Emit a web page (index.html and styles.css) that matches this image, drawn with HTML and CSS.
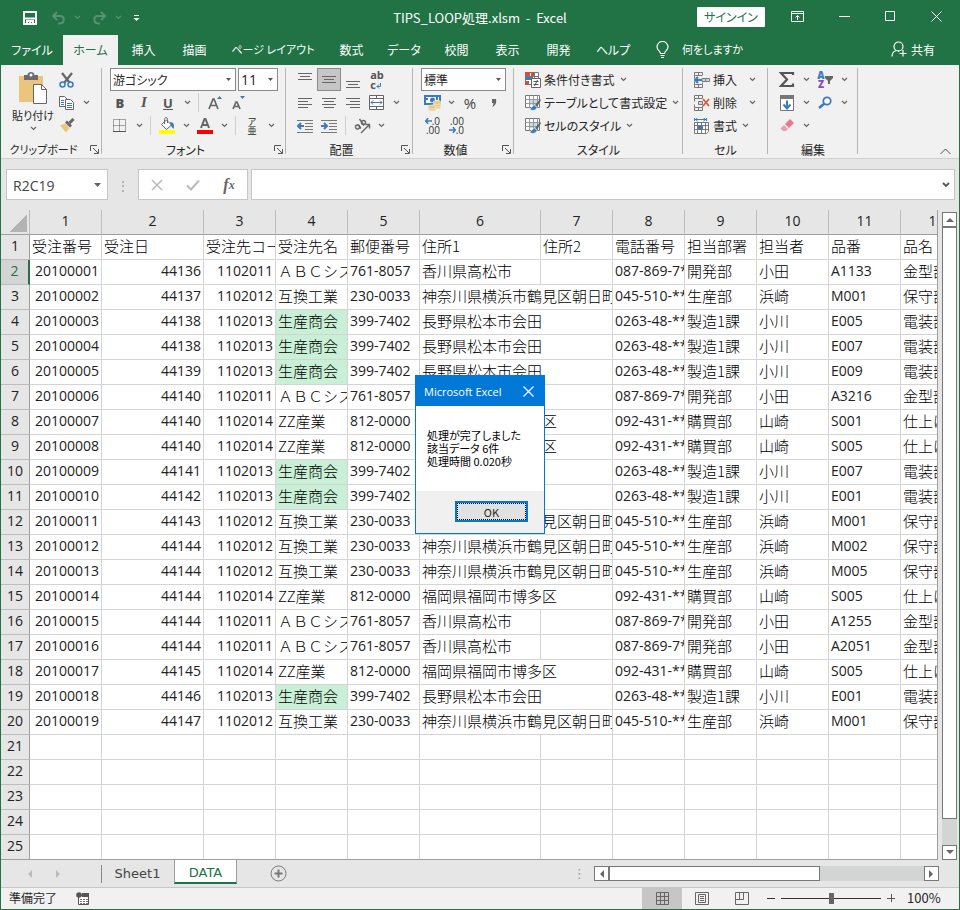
FILE: index.html
```
<!DOCTYPE html>
<html lang="ja">
<head>
  <meta charset="UTF-8">
  <meta name="viewport" content="width=device-width, initial-scale=1">
  <title>TIPS_LOOP処理.xlsm - Excel</title>
  <link rel="stylesheet" href="styles.css">
</head>
<body>
  <svg class="defs" aria-hidden="true">
    <symbol id="chev" viewBox="0 0 7 5"><path d="M1 1l2.5 2.5L6 1" fill="none" stroke="currentColor" stroke-width="1.2"/></symbol>
    <symbol id="launch" viewBox="0 0 9 9"><path d="M.5 6V.5H7M3 3l5 5M8.500 4v4.500H4" fill="none" stroke="currentColor"/></symbol>
    <symbol id="cells" viewBox="0 0 16 16"><path d="M.5 3V.5h8V3M.5 3.500h8M4.500.5v3M.5 13v2.500h8V13M.5 12.500h8M4.500 12.500v3M.5 3.500v3M.5 12.500v-3M8.500 12.500v-2" fill="none" stroke="#777"/></symbol>
    <symbol id="brushtable" viewBox="0 0 16 16"><path d="M.5.5h14v12H.5z" fill="#fff" stroke="#777"/><path d="M4 4h8v6H4z" fill="#c5daee"/><path d="M.5 4.500h14M.5 8.500h14M4.500.5v12M8.500.5v12M12.500.5v12" stroke="#999" fill="none"/><path d="M15 4l-5 6 2 2 4-7z" fill="#666"/><path d="M9.500 10c-2 0-2 3-5 4 2 2 6 2 7.500-1.500z" fill="#3b7abf" stroke="#f1f1f1" stroke-width=".6"/></symbol>
  </svg>

  <header class="titlebar">
    <div class="quick">
      <button type="button" aria-label="上書き保存"><svg width="14" height="14"><path d="M1 1h12v12H1z" fill="none" stroke="#fff" stroke-width="2"/><path d="M2 7.500h10M4 13v-3h6v3" stroke="#fff" stroke-width="2" fill="none"/><path d="M6 11h2v2H6z" fill="#fff"/></svg></button>
      <button type="button" class="off" aria-label="元に戻す"><svg width="15" height="14"><path d="M6 1L2 5l4 4M2 5h7c5 0 5 7 0 7.500H7" fill="none" stroke="currentColor" stroke-width="2"/></svg></button>
      <button type="button" class="off arrow" aria-label="元に戻す一覧"><svg class="chev"><use href="#chev"/></svg></button>
      <button type="button" class="off" aria-label="やり直し"><svg width="15" height="14"><path d="M9 1l4 4-4 4M13 5H6c-5 0-5 7 0 7.500h2" fill="none" stroke="currentColor" stroke-width="2"/></svg></button>
      <button type="button" class="off arrow" aria-label="やり直し一覧"><svg class="chev"><use href="#chev"/></svg></button>
      <button type="button" class="custom" aria-label="ツールバーのカスタマイズ"><svg width="7" height="8"><path d="M1 1.500h5" stroke="#fff"/><path d="M.5 4h6l-3 3z" fill="#fff"/></svg></button>
    </div>
    <div class="title">TIPS_LOOP処理.xlsm&nbsp; -&nbsp; Excel</div>
    <div class="wincontrols">
      <button type="button" class="signin">サインイン</button>
      <button type="button" class="wide" aria-label="リボンの表示オプション"><svg width="14" height="11"><path d="M.5.5h12v10H.5zM.5 2.500h12M6.500 9V4.500M4.500 6.500l2-2 2 2" fill="none" stroke="#fff"/></svg></button>
      <button type="button" aria-label="最小化"><svg width="11" height="11"><path d="M0 5.500h11" stroke="#fff"/></svg></button>
      <button type="button" aria-label="最大化"><svg width="11" height="11"><path d="M.5.5h9v9h-9z" fill="none" stroke="#fff"/></svg></button>
      <button type="button" aria-label="閉じる"><svg width="11" height="11"><path d="M.5.5l10 10M10.500.5l-10 10" stroke="#fff"/></svg></button>
    </div>
  </header>

  <nav class="menu">
    <a href="#">ファイル</a>
    <a href="#" class="active">ホーム</a>
    <a href="#">挿入</a>
    <a href="#">描画</a>
    <a href="#" class="long">ページ レイアウト</a>
    <a href="#">数式</a>
    <a href="#">データ</a>
    <a href="#">校閲</a>
    <a href="#">表示</a>
    <a href="#">開発</a>
    <a href="#">ヘルプ</a>
    <a href="#" class="tell"><svg width="13" height="17"><path d="M4.500 12.500c0-2-3.500-3-3.500-6.500a5.500 5.500 0 0 1 11 0c0 3.500-3.500 4.500-3.500 6.500zM4.500 14.500h4M5 16.500h3" fill="none" stroke="#fff" stroke-width="1.200"/></svg>何をしますか</a>
    <a href="#" class="share"><svg width="16" height="16"><circle cx="7.500" cy="5.500" r="4.500" fill="none" stroke="#fff" stroke-width="1.200"/><path d="M1 15.500c0-3 2-5.500 4.500-6M8 11l-1-1.500M12 9v6.500M8.500 12.500h7" fill="none" stroke="#fff" stroke-width="1.200"/></svg>共有</a>
  </nav>

  <section class="ribbon">
    <div class="group clipboard">
      <div class="cols">
        <button type="button" class="paste">
          <svg width="30" height="32"><path d="M1 4h24v26H1z" fill="#ebc57b"/><path d="M6 3h3.500c0-4 7-4 7 0H20v5H6z" fill="#6b6b6b"/><circle cx="13" cy="3" r="1.500" fill="#fff"/><path d="M15.500 12.500h8l5 5v14h-13z" fill="#fff" stroke="#666"/><path d="M23.500 12.500v5h5" fill="none" stroke="#666"/></svg>
          貼り付け
          <svg class="chev"><use href="#chev"/></svg>
        </button>
        <div class="stack">
          <div class="row"><button type="button" class="tool" aria-label="切り取り"><svg width="16" height="16"><path d="M3 1l7.500 9.500M13 1L5.500 10.500" stroke="#666" stroke-width="2.200"/><circle cx="3.500" cy="12.500" r="2.500" fill="none" stroke="#3b7abf" stroke-width="1.500"/><circle cx="11.500" cy="12.500" r="2.500" fill="none" stroke="#3b7abf" stroke-width="1.500"/></svg></button></div>
          <div class="row"><button type="button" class="tool" aria-label="コピー"><svg width="16" height="14"><path d="M.5.5h5l3 3v7h-8z" fill="#fff" stroke="#666"/><path d="M2 4.500h3M2 6.500h3M2 8.500h3" stroke="#3b7abf"/><path d="M6.500 3.500h5l3 3v7h-8z" fill="#fff" stroke="#666"/><path d="M8 7.500h5M8 9.500h5M8 11.500h5" stroke="#3b7abf"/></svg></button><button type="button" class="arrow" aria-label="コピーの種類"><svg class="chev"><use href="#chev"/></svg></button></div>
          <div class="row"><button type="button" class="tool" aria-label="書式のコピー"><svg width="16" height="15"><path d="M1 7.500l5-2 4.500 4.500-3.500 4.500z" fill="#ebc57b"/><path d="M6 4.500l2-2 5 5-2 2z" fill="#666"/><path d="M10.500 5l4-4" stroke="#666" stroke-width="3"/></svg></button></div>
        </div>
      </div>
      <div class="caption"><span>クリップボード</span><button type="button" aria-label="クリップボードの設定"><svg class="launch"><use href="#launch"/></svg></button></div>
    </div>

    <div class="group font">
      <div class="row combos">
        <select class="combo fontname" aria-label="フォント"><option>游ゴシック</option></select>
        <select class="combo fontsize" aria-label="フォント サイズ"><option>11</option></select>
      </div>
      <div class="row">
        <button type="button" class="tool letter"><b>B</b></button>
        <button type="button" class="tool letter"><i>I</i></button>
        <button type="button" class="tool letter"><u>U</u></button>
        <button type="button" class="arrow" aria-label="下線の種類"><svg class="chev"><use href="#chev"/></svg></button>
        <span class="sep"></span>
        <button type="button" class="tool" aria-label="フォント サイズの拡大"><svg width="14" height="15"><path d="M1 14L5 4h1l4 10M2.500 10.500h6" fill="none" stroke="#666" stroke-width="1.700"/><path d="M9 4h5l-2.500-3z" fill="#3b7abf"/></svg></button>
        <button type="button" class="tool" aria-label="フォント サイズの縮小"><svg width="14" height="15"><path d="M1 14l3-7h1l3 7M2 11.500h5" fill="none" stroke="#666" stroke-width="1.700"/><path d="M8 1h5l-2.500 3z" fill="#3b7abf"/></svg></button>
      </div>
      <div class="row">
        <button type="button" class="tool" aria-label="罫線"><svg width="14" height="14"><path d="M.5.5h12v12H.5zM6.500.5v12M.5 6.500h12" fill="none" stroke="#555" stroke-dasharray="1 1"/><path d="M0 12.500h13" stroke="#555"/></svg></button>
        <button type="button" class="arrow" aria-label="罫線の種類"><svg class="chev"><use href="#chev"/></svg></button>
        <span class="sep"></span>
        <button type="button" class="tool" aria-label="塗りつぶしの色"><svg width="16" height="17"><path d="M2.500 7.500l5-4.500 5 5-5 4.500z" fill="#fff" stroke="#666"/><path d="M5.500 7V2.500c0-2.500 3-2.500 3 0V6" fill="none" stroke="#666"/><path d="M11 5c4 0 4.500 3 3.500 7l-2.500-3z" fill="#3b7abf"/><path d="M0 13h16v4H0z" fill="#ff0"/></svg></button>
        <button type="button" class="arrow" aria-label="塗りつぶしの色の一覧"><svg class="chev"><use href="#chev"/></svg></button>
        <button type="button" class="tool" aria-label="フォントの色"><svg width="16" height="17"><path d="M4 11L7.500 2h1L12 11M5 8h6" fill="none" stroke="#666" stroke-width="2"/><path d="M0 13h16v4H0z" fill="red"/></svg></button>
        <button type="button" class="arrow" aria-label="フォントの色の一覧"><svg class="chev"><use href="#chev"/></svg></button>
        <span class="sep"></span>
        <button type="button" class="tool ruby"><span>ア</span><span>亜</span></button>
        <button type="button" class="arrow" aria-label="ふりがなの設定"><svg class="chev"><use href="#chev"/></svg></button>
      </div>
      <div class="caption"><span>フォント</span><button type="button" aria-label="フォントの設定"><svg class="launch"><use href="#launch"/></svg></button></div>
    </div>

    <div class="group align">
      <div class="row">
        <button type="button" class="tool" aria-label="上揃え"><svg width="14" height="16"><path d="M0 1.500h14M2 4.500h10M0 7.500h14" stroke="#666"/></svg></button>
        <button type="button" class="tool pressed" aria-label="上下中央揃え"><svg width="14" height="12"><path d="M0 2.500h14M2 5.500h10M0 8.500h14" stroke="#666"/></svg></button>
        <button type="button" class="tool" aria-label="下揃え"><svg width="14" height="16"><path d="M0 9.500h14M2 12.500h10M0 15.500h14" stroke="#666"/></svg></button>
        <button type="button" class="tool" aria-label="折り返して全体を表示する"><span class="wrap">ab<br>c<svg width="6" height="6"><path d="M4.500 0v3.500H1M3 1.500l-2 2 2 2" stroke="#3b7abf" fill="none"/></svg></span></button>
      </div>
      <div class="row">
        <button type="button" class="tool" aria-label="左揃え"><svg width="14" height="12"><path d="M0 1.500h14M0 4.500h10M0 7.500h14M0 10.500h10" stroke="#666"/></svg></button>
        <button type="button" class="tool" aria-label="中央揃え"><svg width="14" height="12"><path d="M0 1.500h14M2 4.500h10M0 7.500h14M2 10.500h10" stroke="#666"/></svg></button>
        <button type="button" class="tool" aria-label="右揃え"><svg width="14" height="12"><path d="M0 1.500h14M4 4.500h10M0 7.500h14M4 10.500h10" stroke="#666"/></svg></button>
        <button type="button" class="tool" aria-label="セルを結合して中央揃え"><svg width="16" height="15"><path d="M.5.5h14v14H.5zM.5 3.500h14M.5 11.500h14M7.500.5v3M7.500 11.500v3" fill="#fff" stroke="#666"/><path d="M2 7.500h11M4 5.500l-2 2 2 2M11 5.500l2 2-2 2" fill="none" stroke="#3b7abf"/></svg></button>
        <button type="button" class="arrow" aria-label="結合の種類"><svg class="chev"><use href="#chev"/></svg></button>
      </div>
      <div class="row">
        <button type="button" class="tool" aria-label="インデントを減らす"><svg width="16" height="14"><path d="M0 1.500h16M8 4.500h8M8 7.500h8M8 10.500h8M0 13.500h16" stroke="#777"/><path d="M1 7h6M4 4L1 7l3 3" fill="none" stroke="#3b7abf" stroke-width="2"/></svg></button>
        <button type="button" class="tool" aria-label="インデントを増やす"><svg width="16" height="14"><path d="M0 1.500h16M8 4.500h8M8 7.500h8M8 10.500h8M0 13.500h16" stroke="#777"/><path d="M0 7h6M3 4l3 3-3 3" fill="none" stroke="#3b7abf" stroke-width="2"/></svg></button>
        <span class="sep"></span>
        <button type="button" class="tool" aria-label="方向"><svg width="17" height="16"><g fill="none" stroke="#666" stroke-width="1.400"><circle cx="3.500" cy="9" r="2"/><path d="M4 6.500l3 4M5.500 1l4.500 6.500M7 15l8-8M11.500 6.500h4v4"/><circle cx="9.500" cy="4.500" r="2"/></g></svg></button>
        <button type="button" class="arrow" aria-label="方向の種類"><svg class="chev"><use href="#chev"/></svg></button>
      </div>
      <div class="caption"><span>配置</span><button type="button" aria-label="配置の設定"><svg class="launch"><use href="#launch"/></svg></button></div>
    </div>

    <div class="group number">
      <div class="row combos"><select class="combo format" aria-label="数値の書式"><option>標準</option></select></div>
      <div class="row">
        <button type="button" class="tool" aria-label="通貨表示形式"><svg width="17" height="17"><path d="M1 2h15v8H1z" fill="#fff" stroke="#3b7abf" stroke-width="2"/><circle cx="8.500" cy="6" r="2.500" fill="#3b7abf"/><path d="M1 5h3M13 3v3" stroke="#3b7abf" stroke-width="2"/><g fill="#ebc57b" stroke="#f1f1f1" stroke-width=".7"><ellipse cx="13" cy="13" rx="4" ry="2"/><ellipse cx="13" cy="11" rx="4" ry="2"/><ellipse cx="13" cy="8.500" rx="4" ry="2"/><ellipse cx="8" cy="15" rx="4" ry="2"/><ellipse cx="8" cy="13" rx="4" ry="2"/></g></svg></button>
        <button type="button" class="arrow" aria-label="通貨の種類"><svg class="chev"><use href="#chev"/></svg></button>
        <button type="button" class="tool percent">%</button>
        <button type="button" class="tool" aria-label="桁区切りスタイル"><svg width="6" height="8"><path d="M1 0h4c1 4-1 7-4 8 1-2 2-3 1-4H1z" fill="#666"/></svg></button>
      </div>
      <div class="row">
        <button type="button" class="tool digits" aria-label="小数点以下の表示桁数を増やす"><span><svg width="7" height="6"><path d="M0 3h7M3 0L1 3l2 3" fill="none" stroke="#3b7abf" stroke-width="1.500"/></svg>.0</span><span>.00</span></button>
        <button type="button" class="tool digits" aria-label="小数点以下の表示桁数を減らす"><span>.00</span><span><svg width="7" height="6"><path d="M0 3h7M4 0l2 3-2 3" fill="none" stroke="#3b7abf" stroke-width="1.500"/></svg>.0</span></button>
      </div>
      <div class="caption"><span>数値</span><button type="button" aria-label="表示形式の設定"><svg class="launch"><use href="#launch"/></svg></button></div>
    </div>

    <div class="group styles">
      <div class="row"><button type="button" class="labeled"><svg width="16" height="16"><path d="M.5.5h13v12H.5z" fill="#fff" stroke="#777"/><path d="M0 0h5v4H0zM6 0h3v4H6zM0 9h4v4H0z" fill="#d0512e"/><path d="M0 5h8v3H0z" fill="#3b7abf"/><path d="M.5 4.500h13M9.500.5v6" stroke="#777"/><path d="M6.500 6.500h9v9h-9z" fill="#fff" stroke="#666"/><path d="M8.500 9.500h5M8.500 12.500h5M12.500 8l-3 6" stroke="#555"/></svg>条件付き書式<svg class="chev"><use href="#chev"/></svg></button></div>
      <div class="row"><button type="button" class="labeled"><svg width="16" height="16"><use href="#brushtable"/></svg>テーブルとして書式設定<svg class="chev"><use href="#chev"/></svg></button></div>
      <div class="row"><button type="button" class="labeled"><svg width="16" height="16"><use href="#brushtable"/></svg>セルのスタイル<svg class="chev"><use href="#chev"/></svg></button></div>
      <div class="caption"><span>スタイル</span></div>
    </div>

    <div class="group cellops">
      <div class="row"><button type="button" class="labeled"><svg width="16" height="16"><use href="#cells"/><path d="M8 6.500h7.500v3H8zM11.500 6.500v3" fill="#c5daee" stroke="#777"/><path d="M1 8h7M4 5L1 8l3 3" fill="none" stroke="#3b7abf" stroke-width="2"/></svg>挿入</button><button type="button" class="arrow last" aria-label="挿入の種類"><svg class="chev"><use href="#chev"/></svg></button></div>
      <div class="row"><button type="button" class="labeled"><svg width="16" height="16"><use href="#cells"/><path d="M4.500 6.500h4v3h-4z" fill="#c5daee" stroke="#777"/><path d="M9 4l6 7M15 4l-6 7" stroke="#e0593b" stroke-width="1.800"/></svg>削除</button><button type="button" class="arrow last" aria-label="削除の種類"><svg class="chev"><use href="#chev"/></svg></button></div>
      <div class="row"><button type="button" class="labeled"><svg width="16" height="16"><path d="M1 1.500h11M.5 0v3M12.500 0v3M3.500 0l-2 1.500 2 1.500M9.500 0l2 1.500-2 1.500" fill="none" stroke="#3b7abf"/><path d="M.5 4.500h14v9l-2 2H.5zM.5 7.500h14M.5 11.500h14M3.500 4.500v11M11.500 4.500v11M7.500 4.500v11" fill="#fff" stroke="#777"/><path d="M4 8h5v3H4z" fill="#3b7abf"/></svg>書式<svg class="chev"><use href="#chev"/></svg></button></div>
      <div class="caption"><span>セル</span></div>
    </div>

    <div class="group edit">
      <div class="row">
        <button type="button" class="tool" aria-label="オート SUM"><svg width="16" height="15"><path d="M14 3V1H2l6 6.500L2 14h12v-2.500" fill="none" stroke="#555" stroke-width="2.200"/></svg></button>
        <button type="button" class="arrow" aria-label="集計の種類"><svg class="chev"><use href="#chev"/></svg></button>
        <button type="button" class="tool" aria-label="並べ替えとフィルター"><span class="sort"><b>A</b><b class="z">Z</b></span><svg width="8" height="8"><path d="M0 0h8v2L5 5v3H3V5L0 2z" fill="#666"/></svg></button>
        <button type="button" class="arrow" aria-label="並べ替えの種類"><svg class="chev"><use href="#chev"/></svg></button>
      </div>
      <div class="row">
        <button type="button" class="tool" aria-label="フィル"><svg width="14" height="16"><path d="M.5.5h13v15H.5z" fill="#fff" stroke="#777"/><path d="M0 0h14v4H0z" fill="#777"/><path d="M7 5.500v8M3.500 9.500l3.500 4 3.500-4" fill="none" stroke="#3b7abf" stroke-width="2"/></svg></button>
        <button type="button" class="arrow" aria-label="フィルの種類"><svg class="chev"><use href="#chev"/></svg></button>
        <button type="button" class="tool" aria-label="検索と選択"><svg width="14" height="13"><circle cx="9" cy="5" r="3.700" fill="#fff" stroke="#3b7abf" stroke-width="1.800"/><path d="M6.500 7.500L1 12" stroke="#3b7abf" stroke-width="2.500"/></svg></button>
        <button type="button" class="arrow" aria-label="検索の種類"><svg class="chev"><use href="#chev"/></svg></button>
      </div>
      <div class="row">
        <button type="button" class="tool" aria-label="クリア"><svg width="14" height="13"><path d="M5 5l5-5 4 4-5 5z" fill="#e8798c"/><path d="M4 6l4 4-2 2H3L.5 9.500z" fill="#ee9dab"/></svg></button>
        <button type="button" class="arrow" aria-label="クリアの種類"><svg class="chev"><use href="#chev"/></svg></button>
      </div>
      <div class="caption"><span>編集</span></div>
    </div>

    <button type="button" class="collapse" aria-label="リボンを折りたたむ"><svg width="11" height="7"><path d="M.5 6l5-5 5 5" fill="none" stroke="#555"/></svg></button>
  </section>

  <div class="formulabar">
    <select class="namebox" aria-label="名前ボックス"><option>R2C19</option></select>
    <span class="dots">⋮</span>
    <div class="fxbox">
      <button type="button" aria-label="キャンセル"><svg width="12" height="12"><path d="M1 1l10 10M11 1L1 11" stroke="#bbb" stroke-width="1.600"/></svg></button>
      <button type="button" aria-label="入力"><svg width="14" height="12"><path d="M1 6.500l4 4L13 1.500" fill="none" stroke="#bbb" stroke-width="2"/></svg></button>
      <button type="button" class="fx" aria-label="関数の挿入"><i>f</i><i class="x">x</i></button>
    </div>
    <div class="formula">
      <input type="text" aria-label="数式バー">
      <button type="button" aria-label="数式バーの展開"><svg width="8" height="6"><path d="M1 1l3 3 3-3" fill="none" stroke="#555" stroke-width="1.800"/></svg></button>
    </div>
  </div>

  <main class="sheet">
    <div class="gridwrap">
      <table class="grid">
        <colgroup id="cols"></colgroup>
        <thead><tr id="head"></tr></thead>
        <tbody id="rows"></tbody>
      </table>
    </div>
    <div class="vscroll">
      <button type="button" aria-label="上へスクロール"><svg width="8" height="5"><path d="M0 5l4-4 4 4z" fill="#666"/></svg></button>
      <div class="thumb"></div>
      <div class="track"></div>
      <button type="button" aria-label="下へスクロール"><svg width="8" height="5"><path d="M0 0l4 4 4-4z" fill="#666"/></svg></button>
    </div>
  </main>

  <div class="sheettabs">
    <div class="nav">
      <button type="button" aria-label="前のシート"><svg width="4" height="8"><path d="M4 0v8L0 4z" fill="#bbb"/></svg></button>
      <button type="button" aria-label="次のシート"><svg width="4" height="8"><path d="M0 0v8l4-4z" fill="#bbb"/></svg></button>
    </div>
    <a href="#" class="tab">Sheet1</a>
    <a href="#" class="tab current">DATA</a>
    <button type="button" class="add" aria-label="新しいシート"><svg width="17" height="17"><circle cx="8.500" cy="8.500" r="7.500" fill="none" stroke="#777"/><path d="M8.500 4.500v8M4.500 8.500h8" stroke="#777" stroke-width="2"/></svg></button>
    <span class="dots">⋮</span>
    <div class="hscroll">
      <button type="button" aria-label="左へスクロール"><svg width="5" height="8"><path d="M5 0v8L1 4z" fill="#666"/></svg></button>
      <div class="thumb"></div>
      <div class="track"></div>
      <button type="button" aria-label="右へスクロール"><svg width="5" height="8"><path d="M0 0v8l4-4z" fill="#666"/></svg></button>
    </div>
  </div>

  <footer class="status">
    <span>準備完了</span>
    <button type="button" class="macro" aria-label="マクロの記録"><svg width="14" height="13"><path d="M2.500 3.500h10v9h-10z" fill="#fff" stroke="#555"/><path d="M6 1h7v4H6z" fill="#555"/><circle cx="3" cy="3" r="2.800" fill="#555"/><path d="M4 7.500h8M4 9.500h8M4 11.500h8" stroke="#777" stroke-dasharray="2 1"/></svg></button>
    <div class="views">
      <button type="button" class="on" aria-label="標準"><svg width="13" height="13"><path d="M.5.5h12v12H.5zM.5 4.500h12M.5 8.500h12M4.500.5v12M8.500.5v12" fill="none" stroke="#666"/></svg></button>
      <button type="button" aria-label="ページ レイアウト"><svg width="14" height="13"><path d="M.5.5h13v12H.5zM3.500 2.500h7v8h-7zM5 4.500h4M5 6.500h4M5 8.500h4" fill="none" stroke="#666"/></svg></button>
      <button type="button" aria-label="改ページ プレビュー"><svg width="14" height="13"><path d="M.5.5h13v12H.5zM4.500.5v7M8.500.5v7h-8" fill="none" stroke="#666"/></svg></button>
    </div>
    <button type="button" class="zoombtn" aria-label="縮小"><svg width="9" height="9"><path d="M0 4.500h8" stroke="#333"/></svg></button>
    <input type="range" class="zoom" min="0" max="100" value="50" aria-label="ズーム">
    <button type="button" class="zoombtn" aria-label="拡大"><svg width="9" height="9"><path d="M0 4.500h8M4.500 0v8" stroke="#555"/></svg></button>
    <span class="percentage">100%</span>
  </footer>

  <div class="dialog" role="dialog" aria-labelledby="dlgTitle">
    <div class="dlgtitle"><span id="dlgTitle">Microsoft Excel</span><button type="button" aria-label="閉じる"><svg width="11" height="11"><path d="M.5.5l10 10M10.500.5l-10 10" stroke="#fff" stroke-width="1.300"/></svg></button></div>
    <p>処理が完了しました<br>該当データ 6件<br>処理時間 0.020秒</p>
    <div class="dlgfoot"><button type="button">OK</button></div>
  </div>

  <script src="script.js"></script>
</body>
</html>
```
FILE: styles.css
```
* {
  box-sizing: border-box;
}
body {
  margin: 0;
  height: 100vh;
  display: flex;
  flex-direction: column;
  position: relative;
  overflow: hidden;
  border: 1px solid #217346;
  border-top: none;
  background: #e6e6e6;
  color: #262626;
  font-family: "Noto Sans CJK JP", sans-serif;
  font-size: 12px;
  font-feature-settings: "palt";
}
button, select, input {
  font: inherit;
  font-feature-settings: inherit;
  color: inherit;
  margin: 0;
}
button {
  display: flex;
  align-items: center;
  justify-content: center;
  padding: 0;
  border: none;
  background: none;
  white-space: nowrap;
}
svg {
  display: block;
  flex: none;
}
a {
  color: inherit;
  text-decoration: none;
}
.defs {
  display: none;
}
.chev {
  width: 7px;
  height: 5px;
  color: #666;
}
.launch {
  width: 9px;
  height: 9px;
  color: #555;
}
.arrow {
  width: 14px;
  height: 23px;
}

/* title bar */
.titlebar {
  display: grid;
  grid-template-columns: 1fr auto 1fr;
  align-items: center;
  height: 35px;
  background: #217346;
  color: #fff;
}
.quick {
  display: flex;
  padding-left: 17px;
}
.quick button {
  width: 24px;
}
.quick .off, .quick .off .chev {
  color: #569273;
}
.quick .off {
  margin-left: 4px;
}
.quick .off.arrow {
  width: 14px;
  margin: 0;
}
.quick .off.arrow + button {
  margin-left: 3px;
}
.quick .custom {
  width: 16px;
}
.title {
  font-size: 13px;
}
.wincontrols {
  display: flex;
  justify-content: flex-end;
  align-items: center;
  padding-bottom: 2px;
}
.wincontrols button {
  width: 46px;
  height: 20px;
}
.wincontrols .signin {
  width: 68px;
  background: #fff;
  color: #217346;
  border-radius: 1px;
}
.wincontrols .wide {
  width: 56px;
  padding-left: 10px;
}

/* menu */
.menu {
  display: grid;
  grid-template-columns: 62px 55px 51px 51px 106px 51px 54px 51px 51px 51px 58px 1fr auto;
  height: 30px;
  background: #217346;
  color: #fff;
}
.menu a {
  display: flex;
  align-items: center;
  justify-content: center;
  padding-bottom: 2px;
  white-space: nowrap;
}
.menu .active {
  background: #f1f1f1;
  color: #217346;
}
.menu .long {
  font-size: 11px;
}
.menu .tell {
  justify-content: flex-start;
  gap: 13px;
  padding-left: 14px;
  font-size: 11px;
}
.menu .share {
  gap: 4px;
  padding-right: 24px;
}

/* ribbon */
.ribbon {
  display: flex;
  height: 94px;
  padding-top: 3px;
  background: #f1f1f1;
  border-bottom: 1px solid #cfcfcf;
}
.group {
  flex: none;
  display: flex;
  flex-direction: column;
  background: linear-gradient(#b5b5b5, #b5b5b5) right top / 1px 86px no-repeat;
}
.clipboard { width: 101px; }
.font { width: 184px; padding-left: 6px; }
.align { width: 127px; padding-left: 7px; }
.number { width: 101px; padding-left: 7px; }
.styles { width: 169px; padding-left: 11px; }
.cellops { width: 85px; padding-left: 11px; }
.edit { width: 90px; padding-left: 7px; }
.cols {
  display: flex;
}
.row {
  display: flex;
  align-items: center;
  height: 23px;
}
.tool {
  width: 24px;
  height: 23px;
}
.sep {
  width: 1px;
  height: 19px;
  margin: 0 4px;
  background: #cfcfcf;
}
.paste {
  flex-direction: column;
  justify-content: space-between;
  width: 54px;
  height: 69px;
  padding: 4px 0 6px 10px;
  font-size: 11px;
  line-height: 16px;
}
.labeled {
  gap: 3px;
}
.labeled .chev {
  margin-left: 2px;
}
.arrow.last {
  margin-left: auto;
  margin-right: 9px;
}
.caption {
  display: flex;
  align-items: center;
  height: 21px;
  padding-top: 3px;
}
.caption span {
  flex: 1;
  text-align: center;
  white-space: nowrap;
}
.caption button {
  width: 16px;
}
.clipboard .caption { font-size: 11px; }
.font .caption, .align .caption, .number .caption, .edit .caption { margin-left: -7px; }
.styles .caption, .cellops .caption { margin-left: -11px; }
.combos {
  gap: 2px;
  padding-left: 2px;
}
.align .combos, .number .combos {
  padding-left: 1px;
}
.combo {
  height: 23px;
  padding: 0 2px;
  appearance: none;
  border: 1px solid #8a8a8a;
  border-radius: 0;
  background: #fff url("data:image/svg+xml,%3Csvg xmlns='http://www.w3.org/2000/svg' width='5' height='3'%3E%3Cpath d='M0 0h5L2.500 3z' fill='%23555'/%3E%3C/svg%3E") right 4px center no-repeat;
}
.fontname { width: 126px; }
.fontsize { width: 40px; font-size: 14px; font-family: "Open Sans", sans-serif; }
.format { width: 85px; }
.letter {
  font-family: "Open Sans", sans-serif;
  font-size: 13px;
  font-weight: bold;
  color: #555;
}
.letter i {
  font-family: "Liberation Serif", serif;
  font-size: 15px;
}
.ruby {
  flex-direction: column;
  font-size: 9px;
  line-height: 9px;
}
.pressed {
  background: #c6c6c6;
  border: 1px solid #8a8a8a;
}
.wrap {
  font: bold 11px/10px "Open Sans", sans-serif;
  color: #555;
  text-align: left;
}
.wrap svg {
  display: inline-block;
}
.percent {
  font: 15px "Open Sans", sans-serif;
  color: #444;
}
.digits {
  flex-direction: column;
  align-items: flex-end;
  padding-right: 4px;
  font: 10px/9px "Open Sans", sans-serif;
  color: #333;
}
.digits span {
  display: flex;
  align-items: center;
}
.sort {
  display: flex;
  flex-direction: column;
  font: bold 10px/9px "Open Sans", sans-serif;
  color: #3b7abf;
}
.sort .z {
  color: #8e4bb5;
}
.collapse {
  width: 20px;
  margin-left: auto;
  margin-right: 4px;
  align-items: flex-end;
  padding-bottom: 3px;
}

/* formula bar */
.formulabar {
  display: flex;
  height: 51px;
  padding: 10px 4px 10px 5px;
}
.namebox {
  width: 102px;
  padding: 2px 6px 0;
  appearance: none;
  border: 1px solid #c6c6c6;
  border-radius: 0;
  background: #fff url("data:image/svg+xml,%3Csvg xmlns='http://www.w3.org/2000/svg' width='7' height='4'%3E%3Cpath d='M0 0h7L3.500 4z' fill='%23666'/%3E%3C/svg%3E") right 6px center no-repeat;
  font: 14px "Open Sans", sans-serif;
  color: #444;
}
.dots {
  width: 30px;
  align-self: center;
  text-align: center;
  color: #999;
}
.fxbox {
  display: flex;
  width: 110px;
  margin-right: 3px;
  background: #fff;
  border: 1px solid #c6c6c6;
}
.fxbox button {
  flex: 1;
}
.fx {
  font-family: "Liberation Serif", serif;
  font-size: 16px;
  font-weight: bold;
  color: #666;
}
.fx .x {
  font-size: 12px;
  padding-top: 2px;
}
.formula {
  flex: 1;
  display: flex;
  background: #fff;
  border: 1px solid #c6c6c6;
}
.formula input {
  flex: 1;
  border: none;
  outline: none;
}
.formula button {
  width: 16px;
}

/* grid */
.sheet {
  flex: 1;
  display: flex;
  min-height: 0;
}
.gridwrap {
  flex: 1;
  overflow: hidden;
  background: #fff;
  border-right: 1px solid #9f9f9f;
  border-bottom: 1px solid #9f9f9f;
}
.grid {
  width: 972px;
  table-layout: fixed;
  border-collapse: separate;
  border-spacing: 0;
  font-feature-settings: normal;
  font-size: 15px;
  font-weight: 300;
  color: #000;
}
.grid th, .grid td {
  height: 25px;
  padding: 0 2px 2px;
  overflow: hidden;
  line-height: 22px;
  white-space: nowrap;
  text-align: left;
  font-weight: 300;
  border-right: 1px solid #d4d4d4;
  border-bottom: 1px solid #d4d4d4;
}
.grid .num, .grid .code, .grid th {
  font-family: "Open Sans", "Noto Sans CJK JP", sans-serif;
  font-size: 14px;
  font-weight: 400;
}
.grid .num, .grid .code {
  color: #222;
}
.grid .num {
  text-align: right;
}
.grid th {
  background: #e6e6e6;
  text-align: center;
  color: #222;
}
.grid thead th {
  border-right-color: #bdbdbd;
  border-bottom-color: #9f9f9f;
}
.grid tbody th {
  border-right-color: #9f9f9f;
  border-bottom-color: #bdbdbd;
}
.grid tbody .selected {
  background: #d4d4d4;
  color: #217346;
  border-right: 2px solid #217346;
}
.grid .corner {
  background: linear-gradient(135deg, #e6e6e6 50%, #b3b3b3 50%) 8px 4px / 18px 18px no-repeat #e6e6e6;
}
.grid .hit {
  background: #c9f0d6;
}
.vscroll {
  display: flex;
  flex-direction: column;
  width: 21px;
  padding: 2px 2px 0 4px;
}
.vscroll button, .hscroll button {
  width: 15px;
  height: 15px;
  background: #fff;
  border: 1px solid #777;
}
.thumb {
  background: #fff;
  border: 1px solid #777;
}
.track {
  background: #d2d5d4;
}
.vscroll .thumb {
  flex: 593;
}
.vscroll .track {
  flex: 26;
}

/* sheet tabs */
.sheettabs {
  display: flex;
  height: 27px;
  font-family: "DejaVu Sans", sans-serif;
  font-size: 13px;
  color: #444;
}
.nav {
  display: flex;
  width: 100px;
  gap: 24px;
  padding-left: 27px;
}
.tab {
  display: flex;
  align-items: center;
  justify-content: center;
  width: 73px;
}
.nav + .tab {
  background: linear-gradient(#8a8a8a, #8a8a8a) left center / 1px 18px no-repeat;
}
.tab.current {
  width: 63px;
  height: 24px;
  padding-top: 2px;
  background: #fff;
  color: #217346;
  border: 1px solid #9f9f9f;
  border-top: none;
  border-bottom: 2px solid #217346;
}
.add {
  width: 82px;
}
.sheettabs .dots {
  margin-left: auto;
}
.hscroll {
  display: flex;
  width: 36%;
  padding-top: 6px;
  margin-right: 20px;
}
.hscroll .thumb, .hscroll .track {
  height: 15px;
}
.hscroll .thumb {
  flex: 2;
}
.hscroll .track {
  flex: 1;
}

/* status bar */
.status {
  display: flex;
  align-items: stretch;
  height: 22px;
  padding-left: 8px;
  line-height: 20px;
  background: #f1f1f1;
  border-top: 1px solid #c6c6c6;
}
.macro {
  margin-left: 19px;
}
.views {
  display: flex;
  margin-left: auto;
}
.views button {
  width: 40px;
}
.views .on {
  background: #c6c6c6;
}
.zoombtn {
  width: 18px;
}
.zoom {
  width: 102px;
  height: 21px;
  appearance: none;
  background: linear-gradient(#333, #333) center / 100px 1px no-repeat;
}
.zoom::-webkit-slider-thumb {
  appearance: none;
  width: 5px;
  height: 11px;
  background: #666;
}
.percentage {
  width: 59px;
  padding-left: 7px;
  font-size: 13px;
}

/* message box */
.dialog {
  position: absolute;
  left: 414px;
  top: 375px;
  width: 130px;
  background: #fff;
  border: 1px solid #0078d7;
  font-size: 11px;
}
.dlgtitle {
  display: flex;
  justify-content: space-between;
  align-items: center;
  height: 30px;
  padding: 0 10px 0 8px;
  background: #0078d7;
  color: #fff;
  font-family: "Open Sans", sans-serif;
}
.dialog p {
  margin: 0;
  padding: 23px 0 23px 11px;
  line-height: 13px;
  color: #000;
}
.dlgfoot {
  display: flex;
  justify-content: flex-end;
  padding: 10px 16px 11px 0;
  background: #f0f0f0;
}
.dlgfoot button {
  width: 73px;
  height: 21px;
  background: #e1e1e1;
  border: 2px solid #0078d7;
  outline: 1px dotted #000;
  outline-offset: -3px;
}
```
FILE: script.js
```
const widths = [29, 72, 102, 72, 72, 72, 121, 72, 72, 72, 72, 72, 72];
const titles = ['受注番号', '受注日', '受注先コード', '受注先名', '郵便番号', '住所1', '住所2', '電話番号', '担当部署', '担当者', '品番', '品名'];

const customers = {
  1102011: ['ＡＢＣシステム', '761-8057', '香川県高松市', '087-869-7***', '開発部', '小田', '金型部品'],
  1102012: ['互換工業', '230-0033', '神奈川県横浜市鶴見区朝日町', '045-510-****', '生産部', '浜崎', '保守部品'],
  1102013: ['生産商会', '399-7402', '長野県松本市会田', '0263-48-****', '製造1課', '小川', '電装部品'],
  1102014: ['ZZ産業', '812-0000', '福岡県福岡市博多区', '092-431-****', '購買部', '山崎', '仕上げ品']
};

// 受注日, 受注先コード, 品番
const orders = [
  [44136, 1102011, 'A1133'],
  [44137, 1102012, 'M001'],
  [44138, 1102013, 'E005'],
  [44138, 1102013, 'E007'],
  [44139, 1102013, 'E009'],
  [44140, 1102011, 'A3216'],
  [44140, 1102014, 'S001'],
  [44140, 1102014, 'S005'],
  [44141, 1102013, 'E007'],
  [44142, 1102013, 'E001'],
  [44143, 1102012, 'M001'],
  [44144, 1102012, 'M002'],
  [44144, 1102012, 'M005'],
  [44144, 1102014, 'S005'],
  [44144, 1102011, 'A1255'],
  [44144, 1102011, 'A2051'],
  [44145, 1102014, 'S005'],
  [44146, 1102013, 'E001'],
  [44147, 1102012, 'M001']
];

const td = (text, cls = '') => `<td class="${cls}">${text}</td>`;

// 住所1が長い場合は隣の空セルにはみ出して表示する
const address = (text) => text.length > 7 ? `<td colspan="2">${text}</td>` : td(text) + td('');

const orderCells = ([date, code, part], i) => {
  const [name, zip, addr, tel, dept, person, item] = customers[code];
  return td(20100001 + i, 'num') + td(date, 'num') + td(code, 'num') +
    td(name, code === 1102013 ? 'hit' : '') + td(zip, 'code') + address(addr) +
    td(tel, 'code') + td(dept) + td(person) + td(part, 'code') + td(item);
};

document.getElementById('cols').innerHTML = widths.map((w) => `<col style="width:${w}px">`).join('');
document.getElementById('head').innerHTML = '<th class="corner"></th>' + titles.map((_, i) => `<th>${i + 1}</th>`).join('');

let html = '';
for (let r = 1; r <= 25; r++) {
  let cells;
  if (r === 1) {
    cells = titles.map((t) => td(t)).join('');
  } else if (orders[r - 2]) {
    cells = orderCells(orders[r - 2], r - 2);
  } else {
    cells = titles.map(() => td('')).join('');
  }
  html += `<tr><th class="${r === 2 ? 'selected' : ''}">${r}</th>${cells}</tr>`;
}
document.getElementById('rows').innerHTML = html;
```
